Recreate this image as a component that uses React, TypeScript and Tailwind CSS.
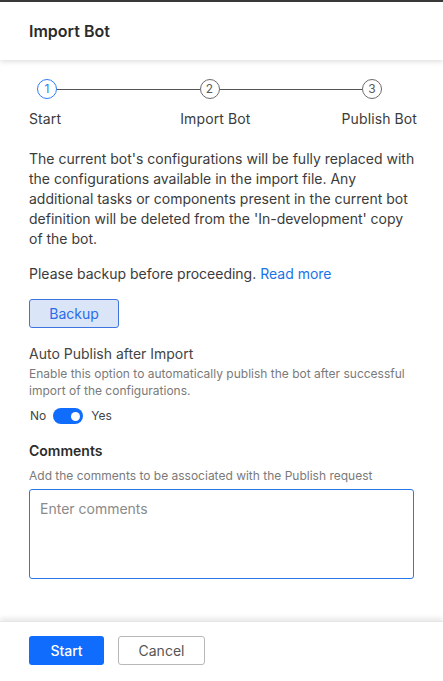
import React, { useState } from 'react';

const Step: React.FC<{ n: number; active?: boolean }> = ({ n, active }) => (
  <div
    className={`w-[20px] h-[20px] rounded-full border flex items-center justify-center text-[12px] leading-none shrink-0 ${
      active ? 'border-[#2f7cf6] text-[#2f7cf6]' : 'border-[#6b6b6b] text-[#5a5a5a]'
    }`}
  >
    {n}
  </div>
);

export default function App() {
  const [autoPublish, setAutoPublish] = useState(true);

  return (
    <div
      className="w-[443px] h-[681px] bg-white flex flex-col border-t-2 border-[#3a3a3a] text-[#3b3b3b]"
      style={{ fontFamily: 'Inter, "Noto Sans", sans-serif' }}
    >
      {/* Header */}
      <div className="h-[58px] shrink-0 flex items-center px-[29px] shadow-[0_2px_5px_rgba(0,0,0,0.12)] relative z-10">
        <h1 className="text-[16px] font-semibold text-[#2b2b2b]">Import Bot</h1>
      </div>

      {/* Body */}
      <div className="flex-1 px-[29px] pt-[19px]">
        {/* Stepper */}
        <div className="flex items-center pl-[8px] pr-[32px]">
          <Step n={1} active />
          <div className="flex-1 h-px bg-[#555]" />
          <Step n={2} />
          <div className="flex-1 h-px bg-[#555]" />
          <Step n={3} />
        </div>
        <div className="flex justify-between text-[14px] text-[#3b3b3b] mt-[10px] leading-[20px] mr-[-3px] tracking-[0.1px]">
          <span>Start</span>
          <span className="pl-[28px]">Import Bot</span>
          <span>Publish Bot</span>
        </div>

        <p className="mt-[20px] text-[14px] leading-[20px] text-[#3b3b3b] mr-[-4px]">
          The current bot's configurations will be fully replaced with the configurations available in the import file. Any additional tasks or components present in the current bot definition will be deleted from the 'In-development' copy of the bot.
        </p>

        <p className="mt-[15px] text-[14px] leading-[20px] text-[#3b3b3b]">
          Please backup before proceeding. <a className="text-[#1a73e8]">Read more</a>
        </p>

        <button className="mt-[15px] w-[90px] h-[29px] rounded-[3px] border border-[#3d74e0] bg-[#dbe5f8] text-[#2a6ce8] text-[14px]">
          Backup
        </button>

        <div className="mt-[16px] text-[14px] leading-[20px] text-[#444]">Auto Publish after Import</div>
        <div className="mt-[1px] text-[12px] leading-[17px] text-[#7a7a7a]">
          Enable this option to automatically publish the bot after successful import of the configurations.
        </div>
        <div className="mt-[8px] flex items-center text-[12px] text-[#444]">
          <span className="ml-[1px]">No</span>
          <button
            onClick={() => setAutoPublish(!autoPublish)}
            className={`ml-[7px] w-[30px] h-[16px] rounded-full flex items-center px-[3px] ${
              autoPublish ? 'bg-[#0f6cfd] justify-end' : 'bg-[#c4c4c4] justify-start'
            }`}
          >
            <span className="w-[9px] h-[9px] rounded-full bg-white" />
          </button>
          <span className="ml-[8px]">Yes</span>
        </div>

        <div className="mt-[16px] text-[14px] font-semibold leading-[20px] text-[#2b2b2b]">Comments</div>
        <div className="mt-[6px] text-[12px] leading-[17px] text-[#7a7a7a]">
          Add the comments to be associated with the Publish request
        </div>
        <textarea
          placeholder="Enter comments"
          className="mt-[5px] w-full h-[90px] resize-none rounded-[3px] border border-[#2a78e8] px-[10px] pt-[9px] pb-[8px] text-[14px] leading-[20px] placeholder:text-[#8a8a8a] outline-none block"
        />
      </div>

      {/* Footer */}
      <div className="h-[60px] shrink-0 flex items-center gap-[14px] px-[29px] pb-[2px] shadow-[0_-3px_5px_rgba(0,0,0,0.09)] border-t border-[#e6e6e6]">
        <button className="w-[75px] h-[29px] rounded-[3px] bg-[#0f6cfd] text-white text-[14px] font-medium">Start</button>
        <button className="w-[87px] h-[29px] rounded-[3px] border border-[#b8b8b8] bg-white text-[#555] text-[14px]">Cancel</button>
      </div>
    </div>
  );
}
